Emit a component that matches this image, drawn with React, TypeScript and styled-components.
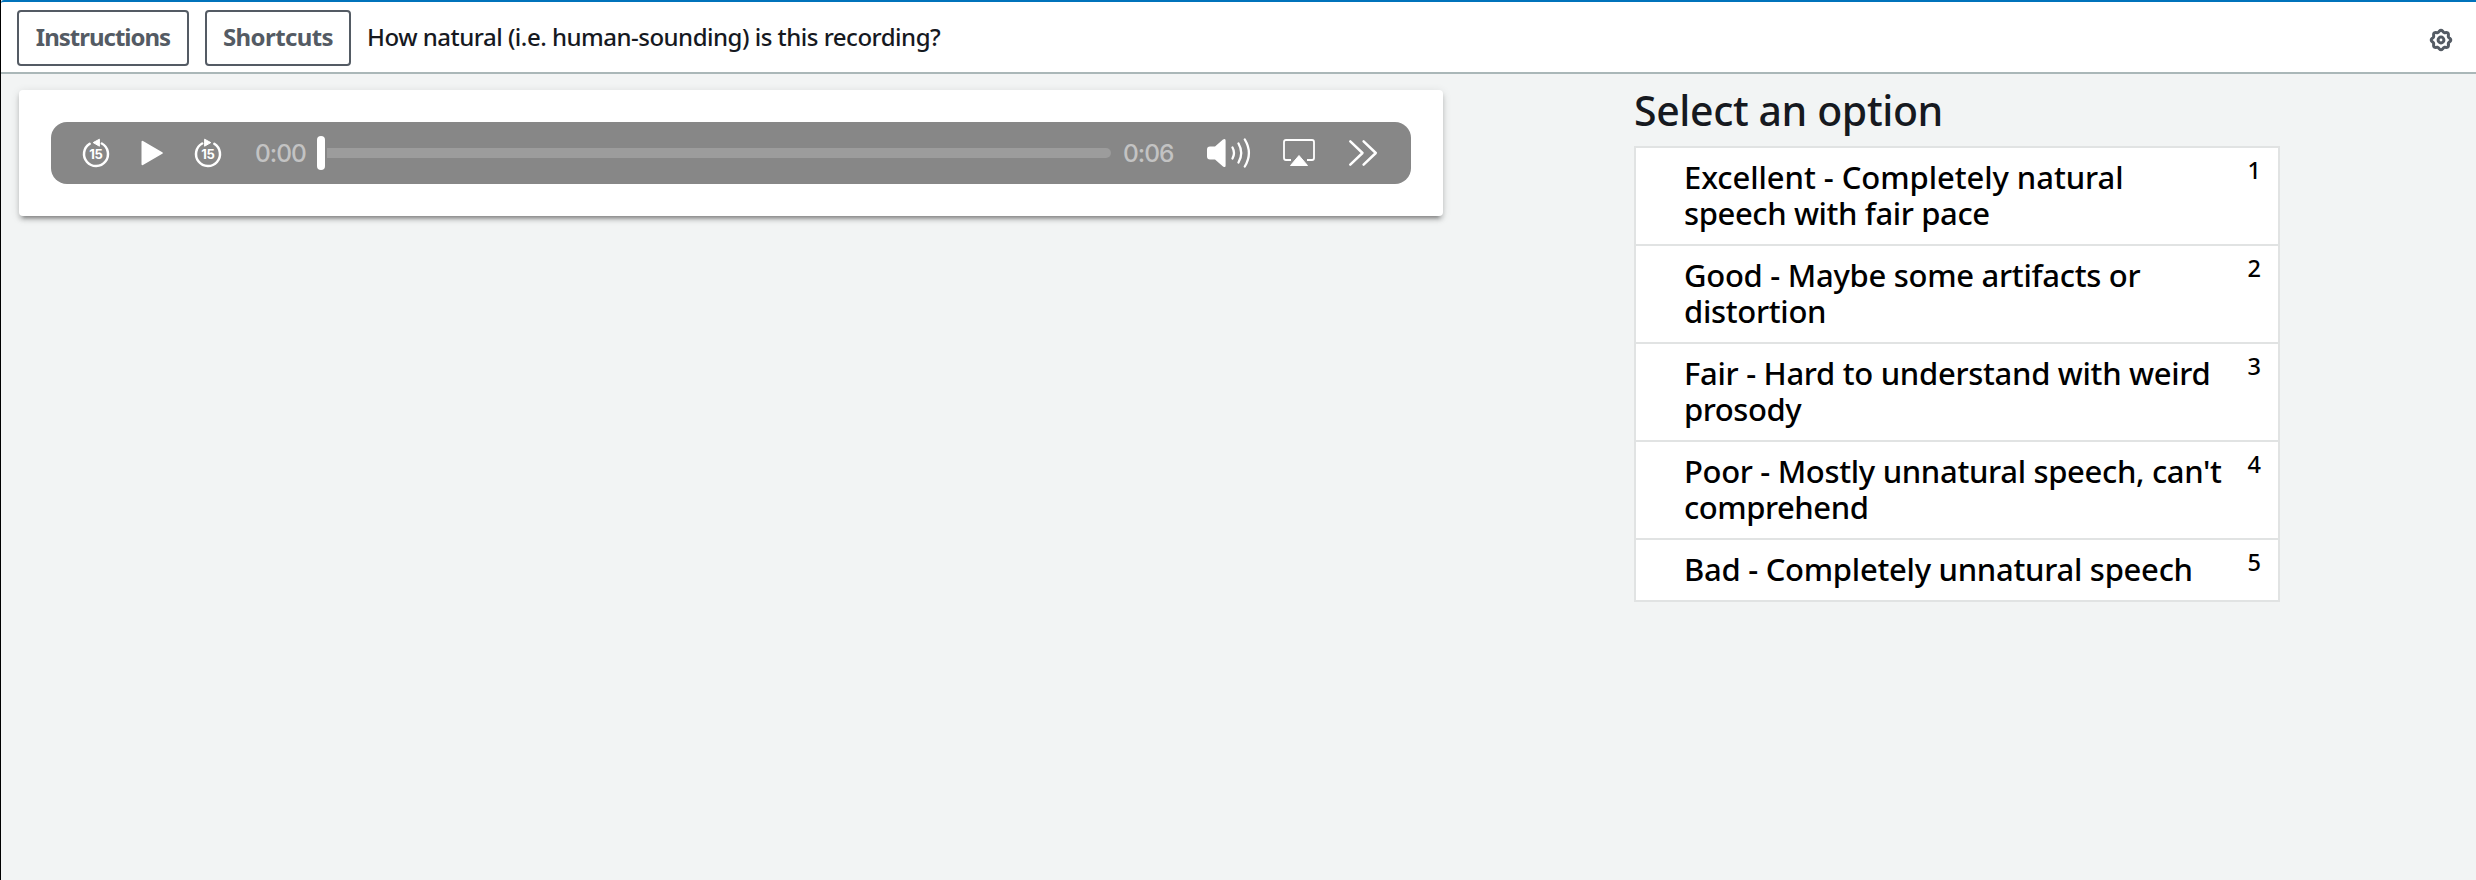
import React from "react";
import styled, { createGlobalStyle } from "styled-components";

const ui = `"Noto Sans", "Open Sans", sans-serif`;

const GlobalStyle = createGlobalStyle`
  * { box-sizing: border-box; }
  body { margin: 0; background: #f2f4f4; font-family: ${ui}; color: #16191f; }
`;

const Page = styled.div`
  height: 880px;
  border-left: 1px solid #000;
  background: #f2f4f4;
  overflow: hidden;
`;

const TopBar = styled.header`
  display: flex;
  align-items: center;
  height: 74px;
  padding: 2px 23px 0 16px;
  background: #fff;
  border-top: 2px solid #0073bb;
  border-bottom: 2px solid #aab7b8;
  border-top-left-radius: 3px;
`;

const BarButton = styled.button<{ $width: number; $tracking: number }>`
  width: ${(p) => p.$width}px;
  height: 56px;
  margin: 0 16px 0 0;
  padding: 0 0 3px;
  border: 2px solid #545b64;
  border-radius: 4px;
  background: #fff;
  color: #545b64;
  font: 700 24px ${ui};
  letter-spacing: ${(p) => p.$tracking}px;
`;

const Question = styled.span`
  flex: 1;
  margin-bottom: 3px;
  font-size: 24px;
  font-weight: 500;
  letter-spacing: -0.5px;
  white-space: nowrap;
`;

const GearIcon = styled.svg`
  width: 24px;
  height: 24px;
  margin-top: 4px;
`;

const Content = styled.main`
  display: flex;
  align-items: flex-start;
`;

const PlayerCard = styled.section`
  width: 1424px;
  height: 126px;
  margin: 16px 0 0 18px;
  padding: 32px;
  background: #fff;
  border-radius: 4px;
  box-shadow: 0 4px 4px rgba(0, 0, 0, 0.16), 0 2px 10px rgba(0, 0, 0, 0.12),
    0 6px 3px -4px rgba(0, 0, 0, 0.26);
`;

const Player = styled.div`
  display: flex;
  align-items: center;
  height: 62px;
  padding: 0 33px 0 30px;
  background: #878787;
  border-radius: 16px;
`;

const Icon = styled.svg<{ $gap?: number }>`
  flex: none;
  margin-right: ${(p) => p.$gap ?? 0}px;
  fill: none;
  stroke: #fff;
`;

const SkipLabel = styled.text`
  fill: #fff;
  stroke: none;
  font: 700 13px Inter, sans-serif;
  letter-spacing: -0.5px;
  text-anchor: middle;
`;

const Time = styled.span<{ $gap?: number }>`
  width: 51px;
  margin-right: ${(p) => p.$gap ?? 0}px;
  color: #c3c3c3;
  font: 500 24.5px/30px Inter, sans-serif;
  letter-spacing: -1px;
  white-space: nowrap;
`;

const Scrubber = styled.div`
  display: flex;
  align-items: center;
  gap: 2px;
  flex: 1;
  margin: 0 12px 0 11px;
`;

const Thumb = styled.div`
  width: 8px;
  height: 34px;
  border-radius: 4px;
  background: #fff;
`;

const Track = styled.div`
  flex: 1;
  height: 10px;
  border-radius: 0 5px 5px 0;
  background: #9c9c9c;
`;

const Options = styled.aside`
  width: 646px;
  margin-left: 191px;
`;

const Title = styled.h2`
  height: 72px;
  margin: 0;
  padding-top: 8px;
  font-size: 41px;
  font-weight: 500;
  line-height: 56px;
  letter-spacing: -0.38px;
`;

const OptionList = styled.ul`
  margin: 0;
  padding: 0;
  list-style: none;
  border: 2px solid #e1e3e3;
  background: #fff;
  color: #000;
`;

const Option = styled.li`
  display: flex;
  justify-content: space-between;
  padding: 11px 17px 13px 48px;
  & + & { border-top: 2px solid #e1e3e3; }
`;

const Line = styled.span<{ $tracking: number }>`
  display: block;
  font-size: 31px;
  font-weight: 500;
  line-height: 36px;
  letter-spacing: ${(p) => p.$tracking}px;
  white-space: nowrap;
`;

const Key = styled.span`
  margin-top: -1px;
  font-size: 23.5px;
  font-weight: 500;
  line-height: 24px;
`;

const options: [string, number][][] = [
  [["Excellent - Completely natural", -0.06], ["speech with fair pace", -0.38]],
  [["Good - Maybe some artifacts or", -0.28], ["distortion", -0.3]],
  [["Fair - Hard to understand with weird", -0.3], ["prosody", -0.45]],
  [["Poor - Mostly unnatural speech, can't", -0.32], ["comprehend", -0.45]],
  [["Bad - Completely unnatural speech", -0.27]],
];

/* An eight-lobed outline whose radius swings around 8.9 units. */
const gearOutline =
  "M" +
  Array.from({ length: 96 }, (_, i) => {
    const a = (i / 96) * Math.PI * 2;
    const r = 8.9 + 0.85 * Math.cos(8 * a);
    return `${(r * Math.cos(a)).toFixed(2)} ${(r * Math.sin(a)).toFixed(2)}`;
  }).join("L") +
  "Z";

function Skip({ forward, gap }: { forward?: boolean; gap: number }) {
  return (
    <Icon width="30" height="32" viewBox="0 0 30 32" $gap={gap}>
      <g transform={forward ? "translate(30 0) scale(-1 1)" : undefined}>
        <path d="M8.7 6.8A12 12 0 1 0 20.8 6.5" strokeWidth="2.5" strokeLinecap="round" />
        <path d="M12.2 5.6 18.4 2.2V9.2Z" fill="#fff" strokeWidth="1" strokeLinejoin="round" />
      </g>
      <SkipLabel x="14.8" y="22.2">15</SkipLabel>
    </Icon>
  );
}

export default function App() {
  return (
    <Page>
      <GlobalStyle />
      <TopBar>
        <BarButton $width={172} $tracking={-1}>Instructions</BarButton>
        <BarButton $width={146} $tracking={-0.6}>Shortcuts</BarButton>
        <Question>How natural (i.e. human-sounding) is this recording?</Question>
        <GearIcon viewBox="-12 -12 24 24" fill="none" stroke="#545b64" strokeWidth="3">
          <path strokeLinejoin="round" d={gearOutline} />
          <circle r="2.9" />
        </GearIcon>
      </TopBar>
      <Content>
        <PlayerCard>
          <Player>
            <Skip gap={30} />
            <Icon width="22" height="26" viewBox="0 0 22 26" $gap={30}>
              <path d="M1.5 1.8V24.2L20.8 13Z" fill="#fff" strokeWidth="2" strokeLinejoin="round" />
            </Icon>
            <Skip forward gap={32} />
            <Time>0:00</Time>
            <Scrubber>
              <Thumb />
              <Track />
            </Scrubber>
            <Time $gap={33}>0:06</Time>
            <Icon width="44" height="32" viewBox="0 0 44 32" $gap={32}>
              <path d="M0 12.5Q0 9.5 3 9.5H8L16 2.6Q18.6.8 18.6 3.5V28.5Q18.6 31.2 16 29.4L8 22.5H3Q0 22.5 0 19.5Z" fill="#fff" stroke="none" />
              <path d="M25.5 10.5Q28.5 16 25.5 21.5M31.5 6.5Q37 16 31.5 25.5M37.8 2.5Q46 16 37.8 29.5" strokeWidth="2.3" strokeLinecap="round" />
            </Icon>
            <Icon width="32" height="28" viewBox="0 0 32 28" $gap={33}>
              <path d="M8 21H3Q1 21 1 19V3Q1 1 3 1H29Q31 1 31 3V19Q31 21 29 21H24" strokeWidth="1.8" />
              <path d="M16 16.5 24.5 26.5H7.5Z" fill="#fff" strokeWidth="1" strokeLinejoin="round" />
            </Icon>
            <Icon width="30" height="28" viewBox="0 0 30 28">
              <path d="M2.3 2.3 14.5 14 2.3 25.7M15.6 2.3 27.8 14 15.6 25.7" strokeWidth="2.5" strokeLinecap="round" strokeLinejoin="round" />
            </Icon>
          </Player>
        </PlayerCard>
        <Options>
          <Title>Select an option</Title>
          <OptionList>
            {options.map((lines, i) => (
              <Option key={i}>
                <div>
                  {lines.map(([text, tracking]) => (
                    <Line key={text} $tracking={tracking}>{text}</Line>
                  ))}
                </div>
                <Key>{i + 1}</Key>
              </Option>
            ))}
          </OptionList>
        </Options>
      </Content>
    </Page>
  );
}
